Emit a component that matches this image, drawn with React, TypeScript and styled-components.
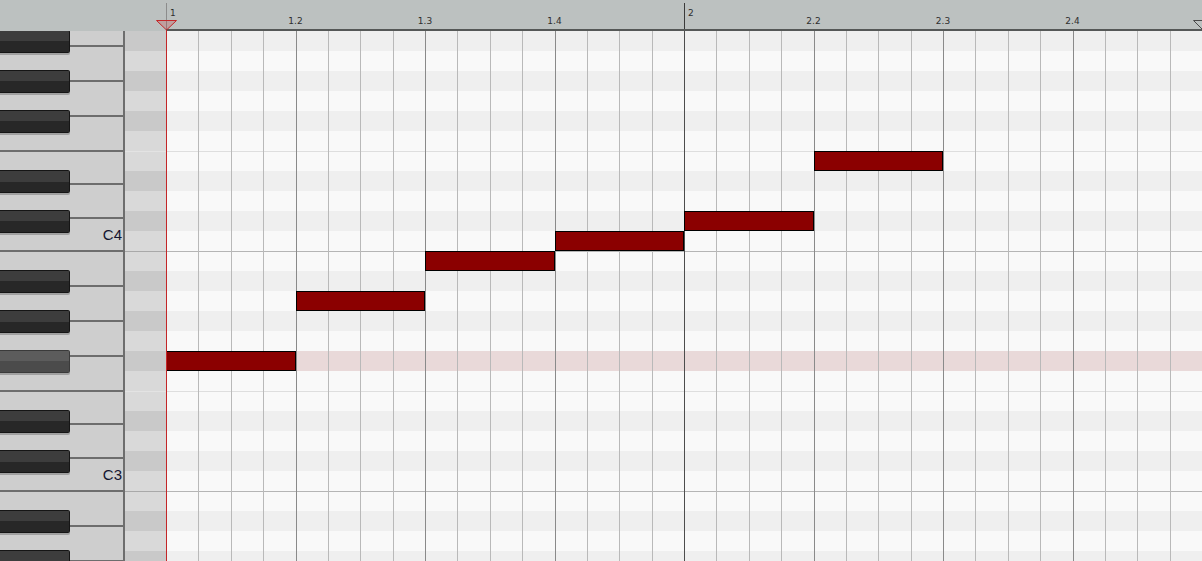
import React from "react";
import styled, { createGlobalStyle } from "styled-components";

const GlobalStyle = createGlobalStyle`
  html, body { margin: 0; padding: 0; background: #f9f9f9; overflow: hidden; }
  body { font-family: "Liberation Sans", Arial, sans-serif; }
`;

/* ---------- data ---------- */
const NAMES = ["B", "A#", "A", "G#", "G", "F#", "F", "E", "D#", "D", "C#", "C"];

type Row = { name: string; octave: number; black: boolean; active: boolean };
const rows: Row[] = (() => {
  const out: Row[] = [];
  let idx = 1;
  let oct = 4;
  for (let i = 0; i < 27; i++) {
    const name = NAMES[idx];
    out.push({ name, octave: oct, black: name.includes("#"), active: name === "F#" && oct === 3 });
    idx++;
    if (idx === 12) {
      idx = 0;
      oct--;
    }
  }
  return out;
})();

type Line = "none" | "light" | "octave";
const lineOf = (r: Row): Line => (r.name === "E" ? "light" : r.name === "B" ? "octave" : "none");

const notes = [
  { row: 16, col: 1 },
  { row: 13, col: 5 },
  { row: 11, col: 9 },
  { row: 10, col: 13 },
  { row: 9, col: 17 },
  { row: 6, col: 21 },
];

const beats = [
  { label: "1", bar: true, tick: "#8c8c8c" },
  { label: "1.2", bar: false, tick: "" },
  { label: "1.3", bar: false, tick: "" },
  { label: "1.4", bar: false, tick: "" },
  { label: "2", bar: true, tick: "#3a3a3a" },
  { label: "2.2", bar: false, tick: "" },
  { label: "2.3", bar: false, tick: "" },
  { label: "2.4", bar: false, tick: "" },
];

const whiteKeys = [
  { name: "B", h: 35 },
  { name: "A", h: 35 },
  { name: "G", h: 35 },
  { name: "F", h: 35 },
  { name: "E", h: 100 / 3 },
  { name: "D", h: 100 / 3 },
  { name: "C", h: 100 / 3 },
];
const blackKeys = [
  { name: "A#", top: 18 },
  { name: "G#", top: 58 },
  { name: "F#", top: 98 },
  { name: "D#", top: 158 },
  { name: "C#", top: 198 },
];
const octaves = [4, 3, 2];

/* ---------- layout ---------- */
const Window = styled.div`
  position: relative;
  width: 1202px;
  height: 561px;
  overflow: hidden;
  display: flex;
  flex-direction: column;
  background: #f9f9f9;
`;

const Ruler = styled.div`
  display: flex;
  height: 31px;
  flex-shrink: 0;
  background: #bcc1c0;
`;

const RulerGutter = styled.div`
  width: 166px;
  flex-shrink: 0;
`;

const Timeline = styled.div`
  position: relative;
  width: 1036px;
  height: 31px;
  box-sizing: border-box;
  border-bottom: 2px solid #555857;
  display: grid;
  grid-template-columns: repeat(8, 129.5px);
  font-family: "DejaVu Sans", Verdana, sans-serif;
  font-size: 9px;
  line-height: 10px;
  color: #2e2e2e;
`;

const BeatCell = styled.div<{ $tick: string }>`
  margin-top: 3px;
  height: 26px;
  box-sizing: border-box;
  border-left: 1px solid ${(p) => p.$tick || "transparent"};
  display: flex;
  flex-direction: column;
`;

const BarLabel = styled.span`
  padding: 5px 0 0 3px;
`;

const BeatAnchor = styled.div`
  width: 0;
  margin: 13px 0 0 -1px;
  display: flex;
  justify-content: center;
  white-space: nowrap;
`;

const EndMarker = styled.svg`
  position: absolute;
  right: -12px;
  top: 20px;
`;

const Body = styled.div`
  display: flex;
  height: 530px;
  overflow: hidden;
`;

const Keyboard = styled.div`
  width: 125px;
  flex-shrink: 0;
  box-sizing: border-box;
  border-right: 2px solid #6e6e6e;
  background: #cecece;
  overflow: hidden;
`;

const KeyboardScroll = styled.div`
  margin-top: -19px;
  display: flex;
  flex-direction: column;
`;

const Octave = styled.div`
  position: relative;
  height: 240px;
  flex-shrink: 0;
  display: flex;
  flex-direction: column;
`;

const WhiteKey = styled.div<{ $h: number }>`
  height: ${(p) => p.$h}px;
  flex-shrink: 0;
  box-sizing: border-box;
  border-bottom: 2px solid #6d6d6d;
  display: flex;
  justify-content: flex-end;
  align-items: center;
  padding-right: 1px;
  font-family: "Liberation Sans", Arial, sans-serif;
  font-size: 15px;
  color: #15152e;
`;

const BlackKey = styled.div<{ $top: number; $active: boolean }>`
  position: absolute;
  left: 0;
  top: ${(p) => p.$top}px;
  width: 70px;
  height: 23px;
  box-sizing: border-box;
  border: 1px solid ${(p) => (p.$active ? "#3a3a3a" : "#151515")};
  border-left: none;
  border-radius: 0 2px 2px 0;
  background: ${(p) =>
    p.$active
      ? "linear-gradient(to bottom, #5c5c5c 0 50%, #4b4b4b 50% 100%)"
      : "linear-gradient(to bottom, #3d3d3d 0 50%, #272727 50% 100%)"};
  box-shadow: 0 2px 0 rgba(0, 0, 0, 0.22);
`;

const KeyLanes = styled.div`
  width: 41px;
  flex-shrink: 0;
  display: flex;
  flex-direction: column;
  overflow: hidden;
`;

const laneLine = (l: Line, light: string, dark: string) =>
  l === "light" ? `inset 0 1px 0 ${light}` : l === "octave" ? `inset 0 1px 0 ${dark}` : "none";

const LaneCell = styled.div<{ $black: boolean; $line: Line }>`
  height: 20px;
  flex-shrink: 0;
  background: ${(p) => (p.$black ? "#c9c9c9" : "#d9d9d9")};
  box-shadow: ${(p) => laneLine(p.$line, "#e3e3e3", "#a9a9a9")};
`;

const Roll = styled.div`
  width: 1036px;
  height: 530px;
  flex-shrink: 0;
  overflow: hidden;
  display: grid;
  grid-template-columns: repeat(32, 32.375px);
  grid-template-rows: repeat(27, 20px);
`;

const RowBand = styled.div<{ $row: number; $black: boolean; $active: boolean; $line: Line }>`
  grid-column: 1 / -1;
  grid-row: ${(p) => p.$row};
  background: ${(p) => (p.$active ? "#e9d9d9" : p.$black ? "#efefef" : "#f9f9f9")};
  box-shadow: ${(p) => laneLine(p.$line, "#dedede", "#b5b5b5")};
`;

type ColKind = "bar" | "beat" | "sub";
const colColor: Record<ColKind, string> = { bar: "#4d4d4d", beat: "#8a8a8a", sub: "#b9b9b9" };

const ColLine = styled.div<{ $col: number; $kind: ColKind }>`
  grid-row: 1 / -1;
  grid-column: ${(p) => p.$col};
  border-left: 1px solid ${(p) => colColor[p.$kind]};
  z-index: 1;
`;

const Note = styled.div<{ $row: number; $col: number }>`
  grid-row: ${(p) => p.$row};
  grid-column: ${(p) => p.$col} / span 4;
  box-sizing: border-box;
  background: #8b0000;
  border: 1px solid #000;
  z-index: 2;
`;

const Playhead = styled.div`
  position: absolute;
  left: 156px;
  top: 20px;
  bottom: 0;
  width: 21px;
  display: flex;
  flex-direction: column;
  align-items: center;
  z-index: 5;
  pointer-events: none;
`;

const PlayheadLine = styled.div`
  width: 1px;
  flex: 1;
  background: #c42628;
`;

export default function App() {
  return (
    <>
      <GlobalStyle />
      <Window>
        <Ruler>
          <RulerGutter />
          <Timeline>
            {beats.map((b) => (
              <BeatCell key={b.label} $tick={b.tick}>
                {b.bar ? (
                  <BarLabel>{b.label}</BarLabel>
                ) : (
                  <BeatAnchor>
                    <span>{b.label}</span>
                  </BeatAnchor>
                )}
              </BeatCell>
            ))}
            <EndMarker width="21" height="11" viewBox="0 0 21 11">
              <polygon points="0.5,0.5 20.5,0.5 10.5,10.5" fill="#bcc1c0" stroke="#4a4a4a" strokeWidth="1" />
            </EndMarker>
          </Timeline>
        </Ruler>
        <Body>
          <Keyboard>
            <KeyboardScroll>
              {octaves.map((o) => (
                <Octave key={o}>
                  {whiteKeys.map((w) => (
                    <WhiteKey key={w.name} $h={w.h}>
                      {w.name === "C" && o !== 2 ? `C${o}` : ""}
                    </WhiteKey>
                  ))}
                  {blackKeys.map((b) => (
                    <BlackKey key={b.name} $top={b.top} $active={b.name === "F#" && o === 3} />
                  ))}
                </Octave>
              ))}
            </KeyboardScroll>
          </Keyboard>
          <KeyLanes>
            {rows.map((r, i) => (
              <LaneCell key={i} $black={r.black} $line={lineOf(r)} />
            ))}
          </KeyLanes>
          <Roll>
            {rows.map((r, i) => (
              <RowBand key={`r${i}`} $row={i + 1} $black={r.black} $active={r.active} $line={lineOf(r)} />
            ))}
            {Array.from({ length: 32 }, (_, k) => (
              <ColLine
                key={`c${k}`}
                $col={k + 1}
                $kind={k % 16 === 0 ? "bar" : k % 4 === 0 ? "beat" : "sub"}
              />
            ))}
            {notes.map((n, i) => (
              <Note key={`n${i}`} $row={n.row + 1} $col={n.col} />
            ))}
          </Roll>
        </Body>
        <Playhead>
          <svg width="21" height="10" viewBox="0 0 21 10">
            <polygon
              points="0.5,0.5 20.5,0.5 10.5,10"
              fill="rgba(200,40,40,0.22)"
              stroke="#c42628"
              strokeWidth="1"
            />
          </svg>
          <PlayheadLine />
        </Playhead>
      </Window>
    </>
  );
}
